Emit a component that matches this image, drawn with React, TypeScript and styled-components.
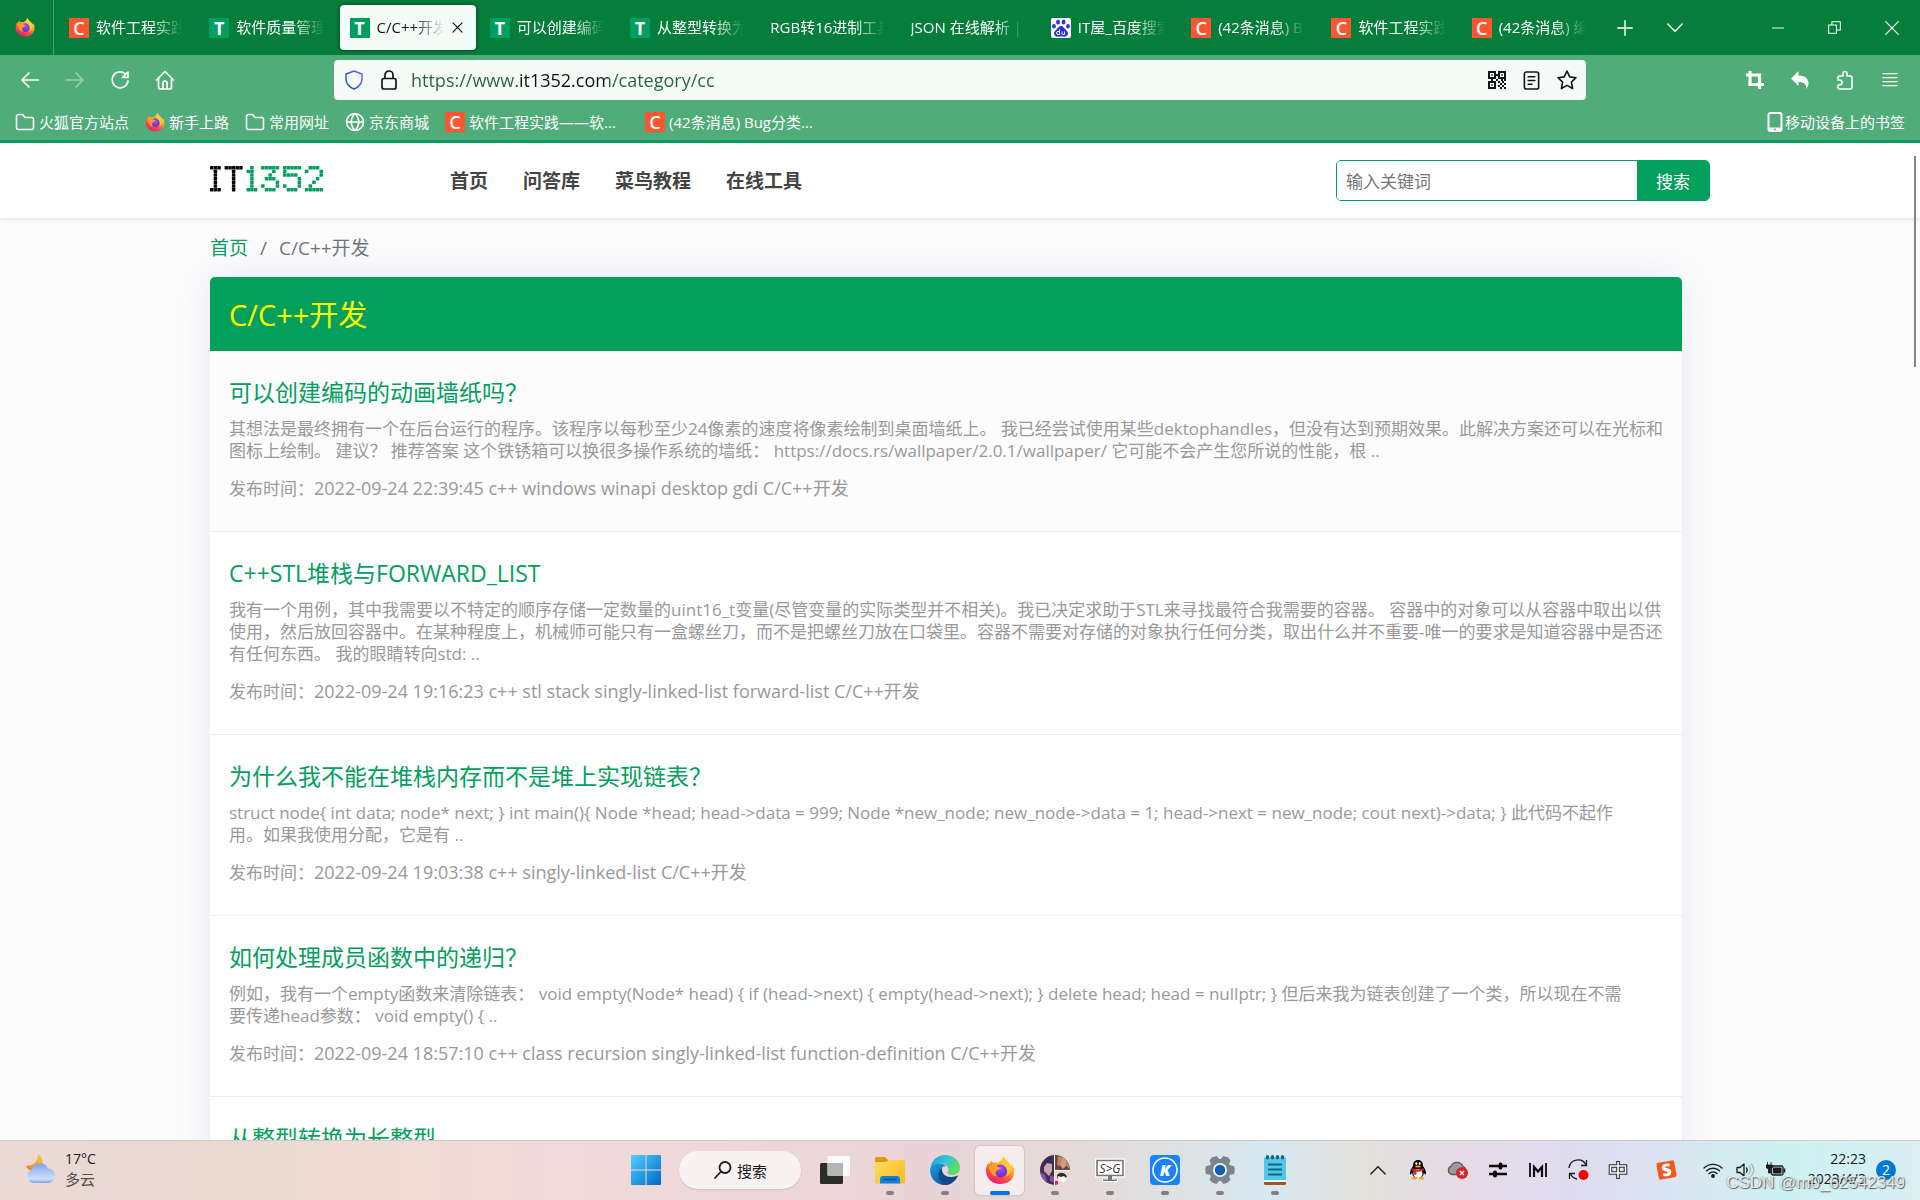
import React from 'react';
import styled, { createGlobalStyle, css } from 'styled-components';

const sans = `'Open Sans', 'Noto Sans CJK SC', sans-serif`;

const color = {
  frame: '#067e3b',
  toolbar: '#50ac78',
  field: '#f3fcf7',
  brand: '#02a05c',
  accent: '#0078d4',
  muted: '#999999',
};

const GlobalStyle = createGlobalStyle`
  *, *::before, *::after { box-sizing: border-box; }
  html, body, #root { height: 100%; margin: 0; }
  body { font-family: ${sans}; background: #fcfcfc; overflow: hidden; }
  button, input { font: inherit; color: inherit; border: 0; background: none; padding: 0; margin: 0; outline: none; }
  a { color: inherit; text-decoration: none; }
  h1, h2, p, ul { margin: 0; padding: 0; font-weight: 400; }
  ul { list-style: none; }
  svg { display: block; flex: none; }
`;

const Desktop = styled.div`
  display: flex;
  flex-direction: column;
  height: 100vh;
`;

/* ---------- Tab strip ---------- */

const TabStrip = styled.div`
  display: flex;
  align-items: stretch;
  flex: none;
  height: 55px;
  background: ${color.frame};
  color: #fff;
`;

const ViewButton = styled.button`
  display: grid;
  place-items: center;
  width: 54px;
  padding: 0 4px 2px 0;
  border-right: 1px solid #4f9f70;
`;

const Tabs = styled.div`
  display: flex;
  flex: 0 1 1546px;
  min-width: 0;
  padding-left: 3px;
`;

const Tab = styled.button<{ $active?: boolean }>`
  display: flex;
  align-items: center;
  gap: 7px;
  flex: 1 1 0;
  min-width: 0;
  height: 45px;
  margin: 5px 2px;
  padding: 0 12px 0 10px;
  border-radius: 4px;
  font-size: 15px;
  line-height: 20px;
  text-align: left;
  ${(p) =>
    p.$active &&
    css`
      background: ${color.field};
      color: #15141a;
      box-shadow: 0 0 5px rgba(0, 0, 0, 0.5);
    `}
`;

const TabLabel = styled.span`
  flex: 1;
  min-width: 0;
  padding-bottom: 2px;
  overflow: hidden;
  white-space: nowrap;
  mask-image: linear-gradient(to left, transparent, #000 32px);
`;

const LetterIcon = styled.span<{ $bg: string; $bold?: boolean }>`
  display: grid;
  place-items: center;
  flex: none;
  width: 20px;
  height: 20px;
  background: ${(p) => p.$bg};
  color: #fff;
  font: ${(p) => (p.$bold ? 700 : 600)} 18px/20px ${sans};
`;

const StripButton = styled.button`
  display: grid;
  place-items: center;
  width: 50px;
`;

const WindowControls = styled.div`
  display: flex;
  margin-left: auto;
`;

const WindowButton = styled(StripButton)`
  width: 57px;
`;

/* ---------- Navigation toolbar ---------- */

const NavBar = styled.div`
  display: grid;
  grid-template-columns: 334px minmax(0, 1fr) 334px;
  align-items: center;
  flex: none;
  height: 50px;
  background: ${color.toolbar};
  color: #fff;
`;

const NavButtons = styled.div<{ $end?: boolean }>`
  display: flex;
  justify-content: ${(p) => (p.$end ? 'flex-end' : 'flex-start')};
  padding: 0 8px 0 7px;
`;

const ToolButton = styled.button<{ $dim?: boolean }>`
  display: grid;
  place-items: center;
  width: 45px;
  height: 40px;
  opacity: ${(p) => (p.$dim ? 0.4 : 1)};
`;

const AddressBar = styled.div`
  display: flex;
  align-items: center;
  height: 40px;
  padding: 0 2px;
  border-radius: 4px;
  background: ${color.field};
  color: #15141a;
`;

const FieldButton = styled.button`
  display: grid;
  place-items: center;
  flex: none;
  width: 35px;
  height: 36px;
`;

const AddressInput = styled.input`
  flex: 1;
  min-width: 0;
  margin-left: 5px;
  font-size: 18px;
  line-height: 24px;
  color: transparent;
  background: linear-gradient(90deg, #2c6144 106px, #101010 106px 197px, #2c6144 197px);
  background-clip: text;
`;

/* ---------- Bookmarks ---------- */

const BookmarkBar = styled.div`
  display: flex;
  align-items: center;
  gap: 16px;
  flex: none;
  height: 35px;
  padding: 0 15px 2px;
  background: ${color.toolbar};
  color: #fff;
`;

const Bookmark = styled.a<{ $wide?: boolean; $end?: boolean }>`
  display: flex;
  align-items: center;
  gap: ${(p) => (p.$end ? '2px' : '4px')};
  width: ${(p) => (p.$wide ? '184px' : 'auto')};
  margin-left: ${(p) => (p.$end ? 'auto' : '0')};
  font-size: 15px;
  line-height: 20px;
  white-space: nowrap;
`;

/* ---------- Page ---------- */

const Page = styled.main`
  position: relative;
  flex: 1;
  min-height: 0;
  overflow: hidden;
  border-top: 3px solid ${color.brand};
  background: #fcfcfc;
`;

const ScrollThumb = styled.div`
  position: absolute;
  top: 13px;
  right: 4px;
  width: 2px;
  height: 211px;
  background: #858585;
`;

const SiteHeader = styled.header`
  background: #fff;
  box-shadow: 0 1px 5px rgba(0, 0, 0, 0.12);
`;

const container = css`
  width: 100%;
  max-width: 1500px;
  margin: 0 auto;
`;

const HeaderInner = styled.div`
  ${container}
  display: flex;
  align-items: center;
  height: 75px;
`;

const LogoLink = styled.a`
  padding-bottom: 3px;
`;

const SiteNav = styled.nav`
  display: flex;
  gap: 35px;
  margin-left: 126px;
  color: #444;
  font-size: 19px;
  font-weight: 700;
  line-height: 28px;
`;

const SearchForm = styled.form`
  display: flex;
  width: 374px;
  height: 41px;
  margin-left: auto;
  border: 1px solid ${color.brand};
  border-radius: 5px;
  overflow: hidden;
  font-size: 17px;
`;

const SearchInput = styled.input`
  flex: 1;
  min-width: 0;
  padding: 2px 9px 0;
  background: #fff;
  &::placeholder { color: #757575; opacity: 1; }
`;

const SearchButton = styled.button`
  width: 72px;
  background: ${color.brand};
  color: #fff;
`;

const Content = styled.div`
  ${container}
  padding-right: 28px;
`;

const Breadcrumb = styled.nav`
  display: flex;
  gap: 12px;
  padding: 16px 0 14px;
  font-size: 19px;
  line-height: 29px;
  color: #6c757d;
  a { color: ${color.brand}; }
`;

const Card = styled.section`
  border-radius: 5px;
  background: #fff;
  box-shadow: 0 0 40px rgba(82, 95, 175, 0.12);
`;

const CardTitle = styled.h1`
  padding: 18px 19px 16px;
  border-radius: 5px 5px 0 0;
  background: ${color.brand};
  color: #ffff00;
  font-size: 29px;
  line-height: 40px;
`;

const Post = styled.li<{ $hover?: boolean }>`
  padding: 27px 19px 32px;
  border-bottom: 1px solid #eeeeee;
  background: ${(p) => (p.$hover ? '#fcfcfc' : '#fff')};
  color: ${color.muted};
  font-size: 17px;
  line-height: 22px;
`;

const PostTitle = styled.h2`
  color: ${color.brand};
  font-size: 23px;
  line-height: 28px;
`;

const Excerpt = styled.p`
  margin: 12px 0 15px;
`;

const Line = styled.span`
  display: block;
  white-space: nowrap;
`;

const Meta = styled.p`
  display: flex;
  align-items: baseline;
  height: 22px;
`;

const Tags = styled.span`
  font-size: 18px;
`;

/* ---------- Taskbar ---------- */

const Taskbar = styled.footer`
  position: relative;
  display: grid;
  grid-template-columns: 1fr auto 1fr;
  flex: none;
  height: 60px;
  padding-bottom: 1px;
  border-top: 1px solid #cfc8c8;
  background: linear-gradient(
    90deg, #ebd9d6 0%, #ead9d2 8%, #eedcd5 22%, #f1dada 29%, #eed8d8 38%, #e7d3d8 49%,
    #e6dad9 56%, #dfe1e2 61%, #d6e8f2 66%, #e3e1db 71%, #e6dbe6 76%, #dfdcf0 82%,
    #dae4f0 87%, #cdf2f2 93%, #d3f0f3 97%, #dbeef4 100%
  );
  color: #1b1b1b;
`;

const Weather = styled.button`
  display: flex;
  align-items: center;
  justify-self: start;
  gap: 8px;
  padding: 0 0 2px 25px;
  text-align: left;
  font-size: 14px;
  line-height: 21px;
`;

const WeatherText = styled.span`
  display: grid;
  small { font-size: 15px; color: #55504e; }
`;

const Apps = styled.div`
  display: flex;
  align-items: center;
`;

const AppButton = styled.button<{ $active?: boolean; $running?: boolean }>`
  position: relative;
  display: grid;
  place-items: center;
  width: 49px;
  height: 49px;
  margin: 0 3px;
  border-radius: 5px;
  background: ${(p) => (p.$active ? '#f5ecee' : 'transparent')};
  box-shadow: ${(p) => (p.$active ? '0 0 2px rgba(0, 0, 0, 0.3)' : 'none')};
  &::after {
    content: '';
    display: ${(p) => (p.$running ? 'block' : 'none')};
    position: absolute;
    bottom: 0;
    left: calc(50% - ${(p) => (p.$active ? '10px' : '4px')});
    width: ${(p) => (p.$active ? '20px' : '8px')};
    height: 4px;
    border-radius: 2px;
    background: ${(p) => (p.$active ? color.accent : '#857f81')};
  }
`;

const SearchPill = styled.button`
  display: flex;
  align-items: center;
  justify-content: center;
  gap: 4px;
  width: 122px;
  height: 38px;
  margin: 0 6px;
  border-radius: 19px;
  background: #f9f2f2;
  box-shadow: 0 1px 2px rgba(0, 0, 0, 0.12);
  font-size: 15px;
`;

const Tray = styled.div`
  display: flex;
  align-items: center;
  justify-content: flex-end;
  padding-right: 24px;
`;

const TrayButton = styled.button<{ $w?: number }>`
  display: grid;
  place-items: center;
  width: ${(p) => p.$w ?? 40}px;
  height: 40px;
`;

const Clock = styled.button`
  display: grid;
  width: 74px;
  margin-right: 10px;
  padding-bottom: 2px;
  text-align: right;
  font-size: 14px;
  line-height: 20px;
  white-space: nowrap;
  justify-items: end;
`;

const Badge = styled.span`
  display: grid;
  place-items: center;
  width: 20px;
  height: 20px;
  border-radius: 50%;
  background: ${color.accent};
  color: #fff;
  font-size: 14px;
  line-height: 20px;
`;

const Watermark = styled.span`
  position: absolute;
  right: 15px;
  bottom: 6px;
  color: rgba(255, 255, 255, 0.75);
  font: 17px/22px 'Liberation Sans', sans-serif;
  text-shadow: 1px 1px 1px rgba(60, 60, 60, 0.8), -1px 0 0 rgba(120, 120, 120, 0.35);
  pointer-events: none;
`;

/* ---------- Drawings ---------- */

const Stroke = ({ d, size = 20, w = 1.6, c = 'currentColor', fill = 'none' }: { d: string; size?: number; w?: number; c?: string; fill?: string }) => (
  <svg width={size} height={size} viewBox="0 0 20 20" fill={fill} stroke={c} strokeWidth={w} strokeLinecap="round" strokeLinejoin="round" aria-hidden="true">
    <path d={d} />
  </svg>
);

const Firefox = ({ size = 20 }: { size?: number }) => (
  <svg width={size} height={size} viewBox="0 0 32 32" aria-hidden="true">
    <defs>
      <linearGradient id="ffBody" x1="0.8" y1="0.05" x2="0.3" y2="1">
        <stop offset="0" stopColor="#fff04a" />
        <stop offset="0.4" stopColor="#ffa22a" />
        <stop offset="0.7" stopColor="#ff4a44" />
        <stop offset="1" stopColor="#e8167f" />
      </linearGradient>
      <radialGradient id="ffCore" cx="0.5" cy="0.3" r="0.8">
        <stop offset="0" stopColor="#a050f0" />
        <stop offset="1" stopColor="#5b2bc4" />
      </radialGradient>
    </defs>
    <path fill="url(#ffBody)" d="M20 1c1 4 5 6 7 9 1 1 1.500 2 1.500 2l.5-2c2 3 2.500 6 2 9.500C30 27 24 31 16.500 31 8 31 1 25 1 16.500c0-4 1.500-6.500 3-8.500v2l3-4.500c.5 1.500 1 2.500 2 3 1.500-.5 3-.500 4.500 0C16 6 19.500 5 20 1z" />
    <circle cx="16.500" cy="17" r="7" fill="url(#ffCore)" />
    <path fill="#ff9a2b" d="M4 12c4-3 8-2 10 .5 1 1 3 1 3 1-1 2-4 2.500-5 3.500-1.500 2-.5 5 2 6-6 .500-9.500-5-10-11z" />
    <path fill="#ffc93a" d="M20 1c1 4 5 6 7 10 2 5 0 10-4 12 2-4 1-9-2-11-3-2-4-6-1-11z" />
  </svg>
);

const Folder = () => <Stroke size={20} w={1.6} d="M1.500 4.500a2 2 0 0 1 2-2h4l2.500 3h6.500a2 2 0 0 1 2 2v8a2 2 0 0 1-2 2h-13a2 2 0 0 1-2-2z" />;

const Globe = () => <Stroke w={1.6} d="M10 1.500a8.500 8.500 0 1 0 0 17 8.500 8.500 0 0 0 0-17zM10 1.500c-5 5-5 12 0 17 5-5 5-12 0-17zM2 10h16" />;

const Phone = () => (
  <svg width="16" height="20" viewBox="0 0 16 20" aria-hidden="true">
    <rect x="1.500" y="1" width="13" height="18" rx="2" fill="none" stroke="#fff" strokeWidth="2" />
    <path d="M1.500 15.500h13v3h-13z" fill="#fff" />
    <circle cx="8" cy="17.500" r="1" fill={color.toolbar} />
  </svg>
);

const Paw = () => (
  <svg width="20" height="20" viewBox="0 0 20 20" aria-hidden="true">
    <rect width="20" height="20" rx="2" fill="#fff" />
    <g fill="#2a32e0">
      <ellipse cx="7" cy="4" rx="1.900" ry="2.600" />
      <ellipse cx="12.600" cy="4" rx="1.900" ry="2.600" />
      <ellipse cx="3" cy="8.300" rx="1.800" ry="2.300" />
      <ellipse cx="17" cy="8.300" rx="1.800" ry="2.300" />
      <path d="M10 8c2 0 3 2 4.500 3.500 2.500 2 3 3.500 2 5.500-1.500 2.500-4 1.500-6.500 1.500S5 19.500 3.500 17c-1-2-.5-3.500 2-5.500C7 10 8 8 10 8z" />
    </g>
    <path d="M8.500 11.500v5H7a1.500 1.500 0 0 1 0-3h1.500M11 13.500v2q0 1 1 1h1.500v-3" fill="none" stroke="#fff" />
  </svg>
);

const Shield = () => (
  <svg width="20" height="20" viewBox="0 0 20 20" aria-hidden="true">
    <defs>
      <linearGradient id="shield" x1="1" y1="0" x2="0" y2="1">
        <stop offset="0" stopColor="#9059ff" />
        <stop offset="1" stopColor="#0250bb" />
      </linearGradient>
    </defs>
    <path d="M10 1 2 4v4.500C2 13 5 17 10 19c5-2 8-6 8-10.500V4z" fill="none" stroke="url(#shield)" strokeWidth="1.500" strokeLinejoin="round" />
  </svg>
);

const QrCode = () => (
  <svg width="18" height="18" viewBox="0 0 18 18" fill="#15141a" aria-hidden="true">
    <path fillRule="evenodd" d="M0 0h8v8H0zM2 2v4h4V2zM10 0h8v8h-8zm2 2v4h4V2zM0 10h8v8H0zm2 2v4h4v-4z" />
    <path d="M3.300 3.300h1.500v1.500H3.300zM13.300 3.300h1.500v1.500h-1.500zM3.300 13.300h1.500v1.500H3.300zM8 3h2v2H8zM3 8h2v2H3zM8 8h2v2H8zM13 8h2v2h-2zM10 10h2v2h-2zM14 10h2v2h-2zM12 12h2v2h-2zM16 12h2v2h-2zM10 14h2v2h-2zM14 14h2v2h-2zM12 16h2v2h-2zM16 16h2v2h-2zM16 8h2v2h-2z" />
  </svg>
);

const CropIcon = () => (
  <svg width="20" height="20" viewBox="0 0 20 20" fill="none" stroke="#fff" strokeWidth="3.200" aria-hidden="true">
    <path d="M5 1v13.500h14M1 5h13.500v14" />
  </svg>
);

const UndoIcon = () => (
  <svg width="20" height="20" viewBox="0 0 20 20" fill="#fff" aria-hidden="true">
    <path d="M8.500 1v4.500C15 5.500 18.500 9 18.500 13c0 2.500-1 4.500-2.500 6 .5-5-2-7-7.500-7v4L1 8.500z" />
  </svg>
);

const logoRows = [
  ['###.#####', '.#..#####.#####..###.'],
  ['.#....#..', '##.....#..#.....#...#'],
  ['.#....#..', '.#....#...####......#'],
  ['.#....#..', '.#...###......#....#.'],
  ['.#....#..', '.#......#.....#...#..'],
  ['.#....#..', '.#..#...#.#...#..#...'],
  ['###...#..', '###..###...###..#####'],
];

const SiteLogo = () => {
  const step = 3.65;
  const dots = logoRows.flatMap(([dark, green], y) => [
    ...[...dark].map((c, x) => ({ c, x, y, fill: '#0a0a0a' })),
    ...[...green].map((c, x) => ({ c, x: x + 10, y, fill: color.brand })),
  ]);
  return (
    <svg width="114" height="26" viewBox="0 0 114 26" role="img" aria-label="IT1352">
      {dots
        .filter((d) => d.c === '#')
        .map((d) => (
          <rect key={`${d.x}-${d.y}`} x={d.x * step} y={d.y * step} width="3.500" height="3.500" rx="0.600" fill={d.fill} />
        ))}
    </svg>
  );
};

const WeatherIcon = () => (
  <svg width="32" height="32" viewBox="0 0 32 32" aria-hidden="true">
    <defs>
      <linearGradient id="cloud" x1="0" y1="0" x2="0" y2="1">
        <stop offset="0" stopColor="#7fa2ea" />
        <stop offset="0.8" stopColor="#cfe0fa" />
        <stop offset="1" stopColor="#7a9fe8" />
      </linearGradient>
      <linearGradient id="moon" x1="1" y1="0" x2="0" y2="1">
        <stop offset="0" stopColor="#f8cf4a" />
        <stop offset="1" stopColor="#ef7c12" />
      </linearGradient>
    </defs>
    <path fill="url(#moon)" d="M13 1c8 5 5 18-5 17-3 0-6-2-7-5 8 0 12-5 12-12z" />
    <path fill="url(#cloud)" d="M8 30a7 7 0 0 1-1-13.500 8.500 8.500 0 0 1 16-1A7.300 7.300 0 0 1 24 30z" />
  </svg>
);

const WindowsLogo = () => (
  <svg width="30" height="30" viewBox="0 0 30 30" aria-hidden="true">
    <defs>
      <linearGradient id="win" x1="0" y1="0" x2="30" y2="30" gradientUnits="userSpaceOnUse">
        <stop offset="0" stopColor="#4fd0ff" />
        <stop offset="1" stopColor="#0067c8" />
      </linearGradient>
    </defs>
    <path fill="url(#win)" d="M1 0h13.500v14.500H0V1a1 1 0 0 1 1-1zM15.500 0H29a1 1 0 0 1 1 1v13.500H15.500zM0 15.500h14.500V30H1a1 1 0 0 1-1-1zM15.500 15.500H30V29a1 1 0 0 1-1 1H15.500z" />
  </svg>
);

const TaskView = () => (
  <svg width="30" height="30" viewBox="0 0 30 30" aria-hidden="true">
    <rect x="0" y="8" width="23" height="21" rx="1.500" fill="#2b2b29" />
    <rect x="7.500" y="1" width="22.500" height="20" rx="1.500" fill="#fafafa" />
    <path d="M7.500 8H23v13H9a1.500 1.500 0 0 1-1.500-1.500z" fill="#b5b3b3" />
  </svg>
);

const Explorer = () => (
  <svg width="30" height="30" viewBox="0 0 30 30" aria-hidden="true">
    <defs>
      <linearGradient id="fold" x1="0" y1="0" x2="1" y2="1">
        <stop offset="0" stopColor="#ffdc6a" />
        <stop offset="1" stopColor="#fcb814" />
      </linearGradient>
    </defs>
    <path d="M0 3.500A1.500 1.500 0 0 1 1.500 2H10l3 3v4H0z" fill="#dc9b08" />
    <path d="M0 7h11l3-2h16v22a1.500 1.500 0 0 1-1.500 1.500h-27A1.500 1.500 0 0 1 0 27z" fill="url(#fold)" />
    <path d="M5 28.500V24a3 3 0 0 1 3-3h14a3 3 0 0 1 3 3v4.500z" fill="#1080d8" />
    <path d="M8.500 24.500h13" stroke="#084c96" strokeWidth="1.500" />
  </svg>
);

const Edge = () => (
  <svg width="30" height="30" viewBox="0 0 30 30" aria-hidden="true">
    <defs>
      <linearGradient id="edgeTop" x1="0" y1="0" x2="1" y2="0.600">
        <stop offset="0" stopColor="#229be0" />
        <stop offset="0.500" stopColor="#35c4d4" />
        <stop offset="1" stopColor="#5fe05a" />
      </linearGradient>
      <linearGradient id="edgeLow" x1="0" y1="0" x2="0.600" y2="1">
        <stop offset="0" stopColor="#1aa0e2" />
        <stop offset="1" stopColor="#0c5aa8" />
      </linearGradient>
    </defs>
    <path fill="url(#edgeTop)" d="M.5 13C1.500 5 8 0 15 0c8.500 0 15 6 15 12.500 0 5-3.500 7.500-7.500 7.500-3 0-5-1-5-2 0-.8 1-1.500 1-3.500 0-3-3-6-8-6-5 0-8.500 2.500-10 4.500z" />
    <path fill="url(#edgeLow)" d="M.2 14c1-4 5-5.500 9-5.500 4 0 6.500 2 7 3-3-1-6 1.500-6 6C10.200 24 15 29 19 29.500 9 32-.8 25 .2 14z" />
    <path fill="#114a8b" d="M12.500 12.500C11 14 12 22 21 22c3 0 5-1 6.500-1.500.5 0 .5.500.3.800C25 27 20 30 16 30c-6-1.500-9-8-7-13 .800-2.200 2-3.700 3.500-4.500z" />
  </svg>
);

const Avatars = () => (
  <svg width="30" height="30" viewBox="0 0 30 30" aria-hidden="true">
    <clipPath id="round"><circle cx="15" cy="15" r="15" /></clipPath>
    <g clipPath="url(#round)">
      <path fill="#3d3150" d="M0 0h14v30H0z" />
      <path fill="#6b4742" d="M15 0h15v15H15z" />
      <path fill="#e8d8cc" d="M15 16h15v14H15z" />
      <path fill="#d0a5b2" d="M4 7q4-4 8 0v9l-3 5-5-5z" />
      <path fill="#3a2b50" d="M3 8q4-8 10-1l-1 2-5-1-3 4z" />
      <path fill="#7a5aa8" d="M0 17l5 3 3 10H0z" />
      <path fill="#a23ab0" d="M10 20l4 2v6l-4-2z" />
      <path fill="#d59b84" d="M20 3h6l1 7-4 4-3-4z" />
      <path fill="#b98a55" d="M18 1l5 1-4 10-2-3zM26 2l3 3v9l-3-4z" />
      <path fill="#fff4ee" d="M18 20h9v5l-4 3-4-3z" />
      <path fill="#33262b" d="M17 20q5-5 10 1l-1 2-2-2-3 1-3-1-1 3z" />
      <path fill="#c02a9a" d="M15 26h3v4h-3z" />
      <path stroke="#fff" d="M14.500 0v30M15 15.500h15" />
    </g>
  </svg>
);

const Screen = () => (
  <svg width="30" height="30" viewBox="0 0 30 30" aria-hidden="true">
    <path d="M0 3.500h30v19H18v1.500h5v3H7v-3h5v-1.500H0z" fill="#fff" />
    <path d="M2 5.500h26v15H2z" fill="#fff" stroke="#767676" strokeWidth="1.600" />
    <path d="M13 21h4v3.500h5v1.500H8v-1.500h5z" fill="#767676" />
    <text x="15" y="17.500" textAnchor="middle" fontFamily="Open Sans" fontStyle="italic" fontSize="12" fill="#333">S&gt;G</text>
  </svg>
);

const KIcon = () => (
  <svg width="30" height="30" viewBox="0 0 30 30" aria-hidden="true">
    <rect width="30" height="30" rx="4" fill="#1b82ff" />
    <circle cx="15" cy="15" r="12" fill="none" stroke="#fff" strokeWidth="1.600" />
    <text x="15" y="20.500" textAnchor="middle" fontFamily="Open Sans" fontWeight="800" fontStyle="italic" fontSize="16" fill="#fff">K</text>
  </svg>
);

const Gear = () => (
  <svg width="30" height="30" viewBox="0 0 30 30" aria-hidden="true">
    <g fill="#7d858c">
      <circle cx="15" cy="15" r="11" />
      {[30, 90, 150, 210, 270, 330].map((a) => (
        <path key={a} d="M10 6l1-5q4-1.500 8 0l1 5z" transform={`rotate(${a} 15 15)`} />
      ))}
    </g>
    <circle cx="15" cy="15" r="7" fill="#eef2f4" />
    <circle cx="15" cy="15" r="5.200" fill="#0f5fb2" />
  </svg>
);

const Notepad = () => (
  <svg width="30" height="30" viewBox="0 0 30 30" aria-hidden="true">
    <path d="M4 27h22v1.500A1.500 1.500 0 0 1 24.500 30h-19A1.500 1.500 0 0 1 4 28.500z" fill="#a4541a" />
    <path d="M4 2.500h22V27H4z" fill="#55c5e2" />
    <path d="M4 25h22v2H4z" fill="#e8f6fa" />
    <path d="M8 9.500h14M8 14.500h14M8 19.500h14" stroke="#0b6a8a" strokeWidth="2" />
    <g fill="#0b6a8a">
      {[7.5, 12.5, 17.5, 22.5].map((x) => <ellipse key={x} cx={x} cy="2.200" rx="1.700" ry="2.200" />)}
    </g>
  </svg>
);

const Penguin = () => (
  <svg width="18" height="20" viewBox="0 0 18 20" aria-hidden="true">
    <path d="M9 0c3.500 0 5 2.500 5 6 2 2.500 3.500 6 3 8-.5 1-1.500 0-2-1-1 4-3 5-6 5s-5-1-6-5c-.5 1-1.500 2-2 1-.5-2 1-5.500 3-8C4 2.500 5.500 0 9 0z" fill="#0b0b0b" />
    <ellipse cx="9" cy="13.500" rx="4.500" ry="4.500" fill="#fff" />
    <ellipse cx="7.300" cy="3.600" rx="1" ry="1.400" fill="#fff" />
    <ellipse cx="10.700" cy="3.600" rx="1" ry="1.400" fill="#fff" />
    <ellipse cx="9" cy="6.500" rx="3" ry="1" fill="#f6a91c" />
    <path d="M3.500 8.200q5.500 2.500 11 0l.4 2q-4 1.800-7.400 1.500v3H5v-3.500l-1.700-.8z" fill="#e8202c" />
    <path d="M2.500 18q3-2 6 0-1 2-3.500 1.800T2.500 18zM9.500 18q3-2 6 0-1 2-3 1.800T9.500 18z" fill="#f6a91c" />
  </svg>
);

const CloudError = () => (
  <svg width="22" height="18" viewBox="0 0 22 18" aria-hidden="true">
    <path d="M5 13.500A4.300 4.300 0 0 1 4 5.300 6.500 6.500 0 0 1 16 5.500c3 1 3.500 4 2 8z" fill="#9b9b9b" stroke="#5a5a5a" strokeWidth="1.300" />
    <circle cx="15" cy="12" r="6" fill="#d9242e" />
    <path d="M13 10l4 4M17 10l-4 4" stroke="#fff" strokeWidth="1.300" />
  </svg>
);

const Sliders = () => (
  <svg width="18" height="18" viewBox="0 0 18 18" fill="none" stroke="#0d0d0d" aria-hidden="true">
    <path d="M0 5h18M0 13h18" strokeWidth="2.600" />
    <path d="M11.500 3.500v3M6 11.500v3" strokeWidth="4" strokeLinecap="round" />
  </svg>
);

const Meter = () => (
  <svg width="18" height="16" viewBox="0 0 18 16" fill="none" stroke="#0d0d0d" aria-hidden="true">
    <path d="M1 1v14M17 1v14" strokeWidth="1.800" />
    <path d="M5 15V5l4 4.500L13 5v10" strokeWidth="2.200" />
  </svg>
);

const Sync = () => (
  <svg width="21" height="22" viewBox="0 0 21 22" aria-hidden="true">
    <path d="M1 9a9 9 0 0 1 17-3M18.500 1v5.500H13M9 20a9 9 0 0 1-6.500-5M1.500 20v-5.500H7" fill="none" stroke="#1b1b1b" strokeWidth="1.300" />
    <circle cx="15.500" cy="16" r="5" fill="#ff0000" />
  </svg>
);

const Ime = () => (
  <svg width="20" height="20" viewBox="0 0 20 20" fill="none" aria-hidden="true">
    <path d="M2.500 6h15v7h-15zM10 1v18" stroke="#2a2a2a" strokeWidth="3.600" />
    <path d="M2.500 6h15v7h-15zM10 2v16" stroke="#fff" strokeWidth="1.600" />
  </svg>
);

const Sogou = () => (
  <svg width="21" height="20" viewBox="0 0 21 20" aria-hidden="true">
    <g transform="rotate(-10 10.500 10)">
      <rect x="1.500" y="1.500" width="18" height="17" rx="2" fill="#f2571c" />
      <text x="10.500" y="16" textAnchor="middle" fontFamily="Open Sans" fontWeight="800" fontSize="17" fill="#fff">S</text>
    </g>
  </svg>
);

const Wifi = () => (
  <svg width="20" height="16" viewBox="0 0 20 16" fill="none" stroke="#1b1b1b" strokeWidth="1.400" strokeLinecap="round" aria-hidden="true">
    <path d="M1 6a13 13 0 0 1 18 0M3.500 8.800a9.500 9.500 0 0 1 13 0M6 11.500a6 6 0 0 1 8 0" />
    <circle cx="10" cy="14" r="1.200" fill="#1b1b1b" />
  </svg>
);

const Speaker = () => (
  <svg width="20" height="16" viewBox="0 0 20 16" fill="none" stroke="#1b1b1b" strokeWidth="1.300" strokeLinejoin="round" strokeLinecap="round" aria-hidden="true">
    <path d="M1 5.500h3L8 2v12l-4-3.500H1zM10.500 6q1.500 2 0 4" />
    <path d="M13 4q3 4 0 8M15.500 2q4.500 6 0 12" stroke="#a9b6ba" />
  </svg>
);

const Battery = () => (
  <svg width="20" height="16" viewBox="0 0 20 16" aria-hidden="true">
    <rect x="5.500" y="4" width="11.500" height="9" rx="1.500" fill="#cdebec" stroke="#1b1b1b" strokeWidth="1.300" />
    <path d="M7 5.500h8.500v6H7zM17.500 6.500h1.800v4h-1.800z" fill="#1b1b1b" />
    <path d="M1.500 0v3M5 0v3M0 3h6.500v2.500L4.500 7v4H2.500V7L0 5.500z" fill="#1b1b1b" stroke="#1b1b1b" strokeWidth="0.800" />
  </svg>
);

/* ---------- Data ---------- */

type Site = 'csdn' | 'it' | 'baidu' | 'none';

const tabs: { site: Site; label: string; active?: boolean }[] = [
  { site: 'csdn', label: '软件工程实践' },
  { site: 'it', label: '软件质量管理' },
  { site: 'it', label: 'C/C++开发', active: true },
  { site: 'it', label: '可以创建编码' },
  { site: 'it', label: '从整型转换为' },
  { site: 'none', label: 'RGB转16进制工具' },
  { site: 'none', label: 'JSON 在线解析 |' },
  { site: 'baidu', label: 'IT屋_百度搜索' },
  { site: 'csdn', label: '(42条消息) B' },
  { site: 'csdn', label: '软件工程实践' },
  { site: 'csdn', label: '(42条消息) 编' },
];

const Favicon = ({ site }: { site: Site }) => {
  if (site === 'csdn') return <LetterIcon $bg="#fc5531" aria-hidden="true">C</LetterIcon>;
  if (site === 'it') return <LetterIcon $bg="#009f61" $bold aria-hidden="true">T</LetterIcon>;
  if (site === 'baidu') return <Paw />;
  return null;
};

const posts = [
  {
    title: '可以创建编码的动画墙纸吗？',
    lines: [
      '其想法是最终拥有一个在后台运行的程序。该程序以每秒至少24像素的速度将像素绘制到桌面墙纸上。 我已经尝试使用某些dektophandles，但没有达到预期效果。此解决方案还可以在光标和',
      '图标上绘制。 建议？ 推荐答案 这个铁锈箱可以换很多操作系统的墙纸： https://docs.rs/wallpaper/2.0.1/wallpaper/ 它可能不会产生您所说的性能，根 ..',
    ],
    meta: '2022-09-24 22:39:45 c++ windows winapi desktop gdi C/C++开发',
  },
  {
    title: 'C++STL堆栈与FORWARD_LIST',
    lines: [
      '我有一个用例，其中我需要以不特定的顺序存储一定数量的uint16_t变量(尽管变量的实际类型并不相关)。我已决定求助于STL来寻找最符合我需要的容器。 容器中的对象可以从容器中取出以供',
      '使用，然后放回容器中。在某种程度上，机械师可能只有一盒螺丝刀，而不是把螺丝刀放在口袋里。容器不需要对存储的对象执行任何分类，取出什么并不重要-唯一的要求是知道容器中是否还',
      '有任何东西。 我的眼睛转向std: ..',
    ],
    meta: '2022-09-24 19:16:23 c++ stl stack singly-linked-list forward-list C/C++开发',
  },
  {
    title: '为什么我不能在堆栈内存而不是堆上实现链表？',
    lines: [
      'struct node{ int data; node* next; } int main(){ Node *head; head->data = 999; Node *new_node; new_node->data = 1; head->next = new_node; cout next)->data; } 此代码不起作',
      '用。如果我使用分配，它是有 ..',
    ],
    meta: '2022-09-24 19:03:38 c++ singly-linked-list C/C++开发',
  },
  {
    title: '如何处理成员函数中的递归？',
    lines: [
      '例如，我有一个empty函数来清除链表： void empty(Node* head) { if (head->next) { empty(head->next); } delete head; head = nullptr; } 但后来我为链表创建了一个类，所以现在不需',
      '要传递head参数： void empty() { ..',
    ],
    meta: '2022-09-24 18:57:10 c++ class recursion singly-linked-list function-definition C/C++开发',
  },
  { title: '从整型转换为长整型', lines: [], meta: '' },
];

const apps = [
  { name: '文件资源管理器', icon: <Explorer /> },
  { name: 'Edge', icon: <Edge /> },
  { name: 'Firefox', icon: <Firefox size={30} />, active: true },
  { name: 'QQ', icon: <Avatars /> },
  { name: '屏幕', icon: <Screen /> },
  { name: '酷狗', icon: <KIcon /> },
  { name: '设置', icon: <Gear /> },
  { name: '记事本', icon: <Notepad /> },
];

export default function App() {
  return (
    <Desktop>
      <GlobalStyle />

      <TabStrip>
        <ViewButton aria-label="Firefox View"><Firefox /></ViewButton>
        <Tabs role="tablist">
          {tabs.map((t, i) => (
            <Tab key={i} role="tab" aria-selected={!!t.active} $active={t.active}>
              <Favicon site={t.site} />
              <TabLabel>{t.label}</TabLabel>
              {t.active && <Stroke size={13} w={1.8} d="M3 3l14 14M17 3L3 17" />}
            </Tab>
          ))}
        </Tabs>
        <StripButton aria-label="新标签页"><Stroke size={16} w={1.8} d="M10 1v18M1 10h18" /></StripButton>
        <StripButton aria-label="列出标签页"><Stroke size={16} w={1.8} d="M1 5l9 9 9-9" /></StripButton>
        <WindowControls>
          <WindowButton aria-label="最小化"><Stroke size={12} w={1.6} d="M0 10h20" /></WindowButton>
          <WindowButton aria-label="还原"><Stroke size={13} w={1.6} d="M1 6h12v13H1zM6 6V1h13v13h-6" /></WindowButton>
          <WindowButton aria-label="关闭"><Stroke size={14} w={1.6} d="M1 1l18 18M19 1L1 19" /></WindowButton>
        </WindowControls>
      </TabStrip>

      <NavBar>
        <NavButtons>
          <ToolButton aria-label="后退"><Stroke w={1.7} d="M18.500 10H2M9 3l-7 7 7 7" /></ToolButton>
          <ToolButton aria-label="前进" $dim><Stroke w={1.7} d="M1.500 10H18M11 3l7 7-7 7" /></ToolButton>
          <ToolButton aria-label="刷新"><Stroke w={1.7} d="M18 11a8 8 0 1 1-3-7.500M18 2v5.500h-5.500z" /></ToolButton>
          <ToolButton aria-label="主页"><Stroke w={1.7} d="M1.500 10L10 1.500l8.500 8.500M3.500 8.500V17a2 2 0 0 0 2 2h9a2 2 0 0 0 2-2V8.500M8 18.500V13a2 2 0 0 1 4 0v5.500" /></ToolButton>
        </NavButtons>
        <AddressBar>
          <FieldButton aria-label="跟踪保护"><Shield /></FieldButton>
          <FieldButton aria-label="连接安全"><Stroke w={1.7} d="M5 8.500h10a2 2 0 0 1 2 2V17a2 2 0 0 1-2 2H5a2 2 0 0 1-2-2v-6.500a2 2 0 0 1 2-2zM6 8.500V5a4 4 0 0 1 8 0v3.500" /></FieldButton>
          <AddressInput aria-label="地址" defaultValue="https://www.it1352.com/category/cc" />
          <FieldButton aria-label="二维码"><QrCode /></FieldButton>
          <FieldButton aria-label="阅读视图"><Stroke size={19} w={1.7} d="M4.500 1h11a2 2 0 0 1 2 2v14a2 2 0 0 1-2 2h-11a2 2 0 0 1-2-2V3a2 2 0 0 1 2-2zM6.500 6h7M6.500 10h7M6.500 14h4" /></FieldButton>
          <FieldButton aria-label="添加书签"><Stroke w={1.6} d="M10 1l2.700 5.900 6.300.8-4.600 4.400 1.200 6.400L10 15.400l-5.600 3.100 1.200-6.400L1 7.700l6.300-.8z" /></FieldButton>
        </AddressBar>
        <NavButtons $end>
          <ToolButton aria-label="截图"><CropIcon /></ToolButton>
          <ToolButton aria-label="撤销"><UndoIcon /></ToolButton>
          <ToolButton aria-label="扩展"><Stroke w={1.6} d="M3 9V7.500a1.500 1.500 0 0 1 1.500-1.500H8V3.500a2 2 0 0 1 4 0V6h3.500A1.500 1.500 0 0 1 17 7.500v10a1.500 1.500 0 0 1-1.500 1.500h-11A1.500 1.500 0 0 1 3 17.500V15h1.500a2 2 0 0 0 0-5H3z" /></ToolButton>
          <ToolButton aria-label="菜单"><Stroke size={16} w={1.6} d="M1 2h18M1 7h18M1 12h18M1 17h18" /></ToolButton>
        </NavButtons>
      </NavBar>

      <BookmarkBar>
        <Bookmark href="#"><Folder />火狐官方站点</Bookmark>
        <Bookmark href="#"><Firefox />新手上路</Bookmark>
        <Bookmark href="#"><Folder />常用网址</Bookmark>
        <Bookmark href="#"><Globe />京东商城</Bookmark>
        <Bookmark href="#" $wide><Favicon site="csdn" />软件工程实践——软...</Bookmark>
        <Bookmark href="#" $wide><Favicon site="csdn" />(42条消息) Bug分类...</Bookmark>
        <Bookmark href="#" $end><Phone />移动设备上的书签</Bookmark>
      </BookmarkBar>

      <Page>
        <SiteHeader>
          <HeaderInner>
            <LogoLink href="#" aria-label="IT1352"><SiteLogo /></LogoLink>
            <SiteNav>
              <a href="#">首页</a>
              <a href="#">问答库</a>
              <a href="#">菜鸟教程</a>
              <a href="#">在线工具</a>
            </SiteNav>
            <SearchForm onSubmit={(e) => e.preventDefault()}>
              <SearchInput aria-label="输入关键词" placeholder="输入关键词" />
              <SearchButton>搜索</SearchButton>
            </SearchForm>
          </HeaderInner>
        </SiteHeader>
        <Content>
          <Breadcrumb>
            <a href="#">首页</a>
            <span>/</span>
            <span>C/C++开发</span>
          </Breadcrumb>
          <Card>
            <CardTitle>C/C++开发</CardTitle>
            <ul>
              {posts.map((p, i) => (
                <Post key={p.title} $hover={i === 0}>
                  <PostTitle><a href="#">{p.title}</a></PostTitle>
                  <Excerpt>
                    {p.lines.map((l) => <Line key={l}>{l}</Line>)}
                  </Excerpt>
                  {p.meta && <Meta>发布时间：<Tags>{p.meta}</Tags></Meta>}
                </Post>
              ))}
            </ul>
          </Card>
        </Content>
        <ScrollThumb />
      </Page>

      <Taskbar>
        <Weather>
          <WeatherIcon />
          <WeatherText>
            17°C
            <small>多云</small>
          </WeatherText>
        </Weather>
        <Apps>
          <AppButton aria-label="开始"><WindowsLogo /></AppButton>
          <SearchPill>
            <Stroke size={20} w={1.8} d="M12 2a5.500 5.500 0 1 1 0 11 5.500 5.500 0 0 1 0-11zM8 11.500L2 18" />
            搜索
          </SearchPill>
          <AppButton aria-label="任务视图"><TaskView /></AppButton>
          {apps.map((a) => (
            <AppButton key={a.name} aria-label={a.name} $running $active={a.active}>{a.icon}</AppButton>
          ))}
        </Apps>
        <Tray>
          <TrayButton aria-label="显示隐藏的图标"><Stroke size={16} w={1.7} d="M1 15l9-9 9 9" /></TrayButton>
          <TrayButton aria-label="QQ"><Penguin /></TrayButton>
          <TrayButton aria-label="云同步"><CloudError /></TrayButton>
          <TrayButton aria-label="调节"><Sliders /></TrayButton>
          <TrayButton aria-label="监控"><Meter /></TrayButton>
          <TrayButton aria-label="更新"><Sync /></TrayButton>
          <TrayButton aria-label="输入法"><Ime /></TrayButton>
          <TrayButton aria-label="搜狗" $w={56}><Sogou /></TrayButton>
          <TrayButton aria-label="网络" $w={38}><Wifi /></TrayButton>
          <TrayButton aria-label="音量" $w={28}><Speaker /></TrayButton>
          <TrayButton aria-label="电池" $w={32}><Battery /></TrayButton>
          <Clock>
            <span>22:23</span>
            <span>2023/4/3</span>
          </Clock>
          <Badge>2</Badge>
        </Tray>
        <Watermark>CSDN @m0_62542349</Watermark>
      </Taskbar>
    </Desktop>
  );
}
